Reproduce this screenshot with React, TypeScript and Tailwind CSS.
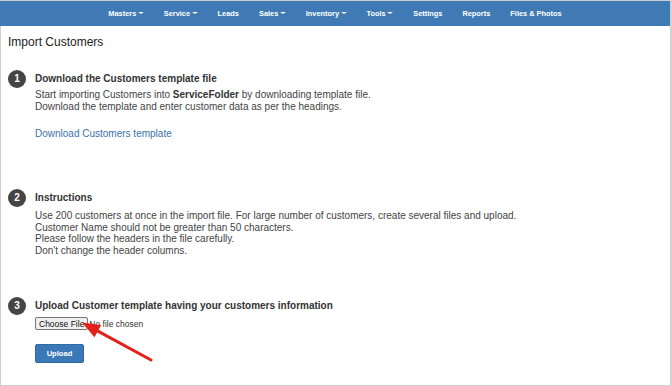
import React from "react";

const navItems: { label: string; caret: boolean }[] = [
  { label: "Masters", caret: true },
  { label: "Service", caret: true },
  { label: "Leads", caret: false },
  { label: "Sales", caret: true },
  { label: "Inventory", caret: true },
  { label: "Tools", caret: true },
  { label: "Settings", caret: false },
  { label: "Reports", caret: false },
  { label: "Files & Photos", caret: false },
];

function StepCircle({ n }: { n: number }) {
  return (
    <div className="w-[18px] h-[18px] shrink-0 rounded-full bg-[#454545] text-white text-[10px] font-bold leading-[18px] text-center">
      {n}
    </div>
  );
}

export default function App() {
  return (
    <div className="relative w-[671px] h-[386px] overflow-hidden bg-white border-t border-r border-b border-[#cfcfcf] font-['Liberation_Sans',Arial,sans-serif] text-[#333]">
      <nav className="h-[25px] bg-[#3f7ab5] flex items-center justify-center gap-[20px] text-white text-[7.4px] font-bold">
        {navItems.map((it) => (
          <div key={it.label} className="flex items-center whitespace-nowrap">
            <span>{it.label}</span>
            {it.caret && (
              <span className="ml-[1.5px] w-0 h-0 border-l-[3px] border-r-[3px] border-t-[2.5px] border-l-transparent border-r-transparent border-t-white" />
            )}
          </div>
        ))}
      </nav>

      <div className="h-[359px] border-l border-[#cfcfcf] pl-[7px] flex flex-col">
        <h1 className="mt-[8px] text-[12px] leading-[16px] text-[#222]">Import Customers</h1>

        {/* Step 1 */}
        <div className="mt-[20px] flex items-start gap-[9px]">
          <StepCircle n={1} />
          <div className="flex flex-col">
            <div className="text-[10px] leading-[18px] font-bold text-[#333]">
              Download the Customers template file
            </div>
            <div className="mt-[1px] text-[10px] leading-[12px] text-[#444]">
              <div>
                Start importing Customers into <b className="font-bold text-[#333]">ServiceFolder</b> by downloading template file.
              </div>
              <div>Download the template and enter customer data as per the headings.</div>
            </div>
            <div className="mt-[15px] text-[10px] leading-[12px] text-[#3a72ad]">Download Customers template</div>
          </div>
        </div>

        {/* Step 2 */}
        <div className="mt-[49px] flex items-start gap-[9px]">
          <StepCircle n={2} />
          <div className="flex flex-col">
            <div className="text-[10px] leading-[18px] font-bold text-[#333]">Instructions</div>
            <div className="mt-[3px] text-[10px] leading-[11.6px] text-[#444]">
              <div>
                Use 200 customers at once in the import file. For large number of customers, create several files and upload.
              </div>
              <div>Customer Name should not be greater than 50 characters.</div>
              <div>Please follow the headers in the file carefully.</div>
              <div>Don't change the header columns.</div>
            </div>
          </div>
        </div>

        {/* Step 3 */}
        <div className="mt-[41px] flex items-start gap-[9px]">
          <StepCircle n={3} />
          <div className="flex flex-col items-start">
            <div className="text-[10px] leading-[18px] font-bold text-[#333]">
              Upload Customer template having your customers information
            </div>
            <div className="mt-[2px] flex items-center h-[13px]">
              <div className="h-[13px] px-[3px] flex items-center rounded-[2px] border border-[#767676] bg-[#efefef] text-[8.5px] text-[#111] whitespace-nowrap">
                Choose File
              </div>
              <span className="ml-[1px] text-[8.5px] text-[#333] whitespace-nowrap">No file chosen</span>
            </div>
            <div className="mt-[14px] w-[49px] h-[19px] rounded-[2px] bg-[#3a78b7] border border-[#2e6da4] flex items-center justify-center text-white text-[7.6px] font-bold">
              Upload
            </div>
          </div>
        </div>
      </div>

      <svg
        className="absolute left-0 top-0 pointer-events-none"
        width="671"
        height="386"
        viewBox="0 0 671 386"
      >
        <line x1="151" y1="359" x2="97" y2="329.6" stroke="#e3211c" strokeWidth="3" strokeLinecap="round" />
        <polygon points="82,321.5 101.2,323.9 94.5,336.3" fill="#e3211c" />
      </svg>
    </div>
  );
}
